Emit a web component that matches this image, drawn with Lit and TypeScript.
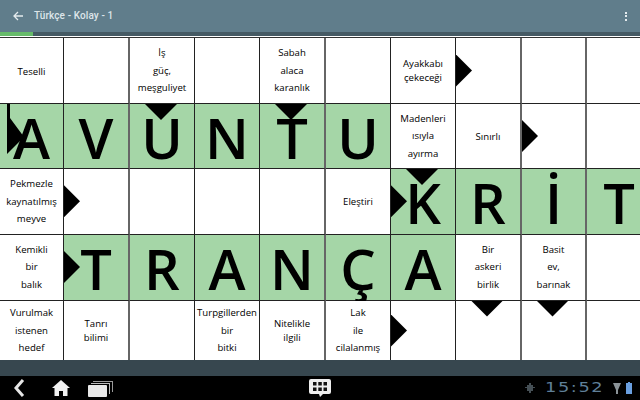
import { LitElement, html, css } from "lit";
import { customElement } from "lit/decorators.js";

type Cell = { t?: string[]; l?: string; r?: boolean; d?: boolean; bent?: boolean };

const ROWS: Cell[][] = [
  [{ t: ["Teselli"] }, {}, { t: ["İş", "güç,", "meşguliyet"] }, {}, { t: ["Sabah", "alaca", "karanlık"] }, {}, { t: ["Ayakkabı", "çekeceği"] }, { r: true }, {}, {}],
  [{ l: "A", bent: true }, { l: "V" }, { l: "U", d: true }, { l: "N" }, { l: "T", d: true }, { l: "U" }, { t: ["Madenleri", "ısıyla", "ayırma"] }, { t: ["Sınırlı"] }, { r: true }, {}],
  [{ t: ["Pekmezle", "kaynatılmış", "meyve"] }, { r: true }, {}, {}, {}, { t: ["Eleştiri"] }, { l: "K", r: true, d: true }, { l: "R" }, { l: "İ" }, { l: "T" }],
  [{ t: ["Kemikli", "bir", "balık"] }, { l: "T", r: true }, { l: "R" }, { l: "A" }, { l: "N" }, { l: "Ç" }, { l: "A" }, { t: ["Bir", "askeri", "birlik"] }, { t: ["Basit", "ev,", "barınak"] }, {}],
  [{ t: ["Vurulmak", "istenen", "hedef"] }, { t: ["Tanrı", "bilimi"] }, {}, { t: ["Turpgillerden", "bir", "bitki"] }, { t: ["Nitelikle", "ilgili"] }, { t: ["Lak", "ile", "cilalanmış"] }, { r: true }, { d: true }, { d: true }, {}],
];
const SOFT = new Set([1, 4, 7, 8]);

@customElement("app-root")
export class AppRoot extends LitElement {
  static styles = css`
    :host { display: block; width: 640px; height: 400px; overflow: hidden; background: #fff; font-family: "Open Sans", "Noto Sans", sans-serif; }
    .page { display: flex; flex-direction: column; width: 640px; height: 400px; }
    .bar { height: 32px; flex: none; background: #607d8b; display: flex; align-items: center; color: #e4ebee; }
    .back { margin-left: 13px; width: 10px; height: 10px; display: block; }
    .title { margin-left: 11px; font: 500 10px/1 Roboto, sans-serif; letter-spacing: 0.1px; color: #dde5e9; }
    .dots { margin-left: auto; margin-right: 13px; display: flex; flex-direction: column; gap: 1.5px; }
    .dots i { width: 2px; height: 2px; background: #e4ebee; display: block; }
    .progress { height: 4px; flex: none; background: #455a64; }
    .progress div { width: 33px; height: 100%; background: #66bb6a; }
    .board { flex: none; height: 324px; overflow: hidden; padding-top: 1px; box-sizing: border-box; }
    .grid { display: grid; width: 652px; height: 323px; border-top: 1px solid #333; box-sizing: border-box;
      grid-template-columns: 64px 66px 65px 65px 66px 65px 65px 66px 65px 65px;
      grid-template-rows: 66px 65px 65.5px 66px 60px; }
    .cell { position: relative; box-sizing: border-box; border-right: 1px solid #222; border-bottom: 1px solid #222;
      display: flex; flex-direction: column; align-items: center; justify-content: center; background: #fff; min-width: 0; }
    .cell.soft { border-right: 2px solid #666; }
    .cell.last { border-bottom: 0; }
    .cell.green { background: #a5d6a7; }
    .clue { font-size: 9.6px; line-height: 14px; color: #000; text-align: center; white-space: nowrap; }
    .clue.one { padding-top: 2px; }
    .clue.three { line-height: 17.4px; }
    .letter { font-size: 56px; line-height: 50px; font-weight: 600; color: #000; margin-top: 1px; }
    .arrow { position: absolute; display: block; background: #000; }
    .arrow.r { left: 0; top: 50%; width: 16px; height: 32px; margin-top: -16px; clip-path: polygon(0 0, 100% 50%, 0 100%); }
    .arrow.d { top: 0; left: 50%; width: 32px; height: 16px; margin-left: -17px; clip-path: polygon(0 0, 100% 0, 50% 100%); }
    .bent { position: absolute; left: 7px; top: 0; width: 18px; height: 50px; display: block; }
    .band { height: 16px; flex: none; background: #37474f; }
    .nav { height: 24px; flex: none; background: #000; display: grid; grid-template-columns: 1fr auto 1fr; align-items: center; }
    .left { display: flex; align-items: center; padding-left: 13px; }
    .home { margin-left: 27px; }
    .recent { margin-left: 18px; }
    .mid { display: block; width: 24px; height: 20px; }
    .right { display: flex; align-items: center; justify-content: flex-end; padding-right: 8px; }
    .clock { font: 400 13.5px/1 "DejaVu Sans", sans-serif; color: #5f7f98; width: 61px; margin: 0 7px 0 9px; letter-spacing: 1.2px; transform: scaleX(1.32); transform-origin: left center; white-space: nowrap; }
    .batt { margin-left: 5px; }
  `;

  private arrowBent() {
    return html`<svg class="bent" viewBox="0 0 18 50"><path d="M0 0h3v14L17 33 0 50z" fill="#000" /></svg>`;
  }

  private cell(c: Cell, col: number, row: number) {
    const cls = `cell${SOFT.has(col) ? " soft" : ""}${c.l ? " green" : ""}${row === 4 ? " last" : ""}`;
    const lines = c.t?.length ?? 0;
    return html`<div class=${cls}>
      ${c.t ? html`<div class="clue ${lines === 3 ? "three" : lines === 1 ? "one" : ""}">${c.t.map((s) => html`<div>${s}</div>`)}</div>` : ""}
      ${c.l ? html`<div class="letter">${c.l}</div>` : ""}
      ${c.r ? html`<span class="arrow r"></span>` : ""}
      ${c.d ? html`<span class="arrow d"></span>` : ""}
      ${c.bent ? this.arrowBent() : ""}
    </div>`;
  }

  render() {
    return html`<div class="page">
      <div class="bar">
        <svg class="back" viewBox="0 0 10 10"><path d="M5 1 1 5l4 4M1.200 5H10" fill="none" stroke="#e4ebee" stroke-width="1.300" /></svg>
        <span class="title">Türkçe - Kolay - 1</span>
        <div class="dots"><i></i><i></i><i></i></div>
      </div>
      <div class="progress"><div></div></div>
      <div class="board">
        <div class="grid">${ROWS.map((r, ri) => r.map((c, ci) => this.cell(c, ci, ri)))}</div>
      </div>
      <div class="band"></div>
      <div class="nav">
        <div class="left">
          <svg width="12" height="18" viewBox="0 0 12 18"><path d="M10 1 3 9l7 8" fill="none" stroke="#e6e6e6" stroke-width="3" /></svg>
          <svg class="home" width="18" height="16" viewBox="0 0 18 16"><path d="M9 0 18 8h-2.500v8H11v-5H7v5H2.500V8H0z" fill="#f2f2f2" /></svg>
          <svg class="recent" width="25" height="17" viewBox="0 0 25 17"><path d="M5 3V1h20v11h-1V2H5z" fill="#999" /><path d="M3 5V3h19v11h-1V4H3z" fill="#bbb" /><rect x="0" y="5" width="19" height="12" rx="1" fill="#e8e8e8" /></svg>
        </div>
        <svg class="mid" viewBox="0 0 24 20"><path d="M3 1h18a2 2 0 0 1 2 2v11a2 2 0 0 1-2 2h-6l-3 3-1-3H3a2 2 0 0 1-2-2V3a2 2 0 0 1 2-2z" fill="#eee" /><path d="M5 4h3.500v3.500H5zM10.300 4h3.500v3.500h-3.500zM15.500 4H19v3.500h-3.500zM5 9.500h3.500V13H5zM10.300 9.500h3.500V13h-3.500zM15.500 9.500H19V13h-3.500z" fill="#111" /></svg>
        <div class="right">
          <svg width="12" height="12" viewBox="0 0 12 12"><path d="M3 3h6v2h2v1H9v3H3V6H1V5h2zM5 1h2v2H5zM5 9h2v2H5z" fill="#454f55" /></svg>
          <span class="clock">15:52</span>
          <svg width="8" height="11" viewBox="0 0 8 11"><path d="M0 0h8L5 7v4H3V7z" fill="#8b9398" /></svg>
          <svg class="batt" width="6" height="12" viewBox="0 0 6 12"><path d="M2 0h2v1h2v11H0V1h2z" fill="#6a9fe0" /></svg>
        </div>
      </div>
    </div>`;
  }
}
